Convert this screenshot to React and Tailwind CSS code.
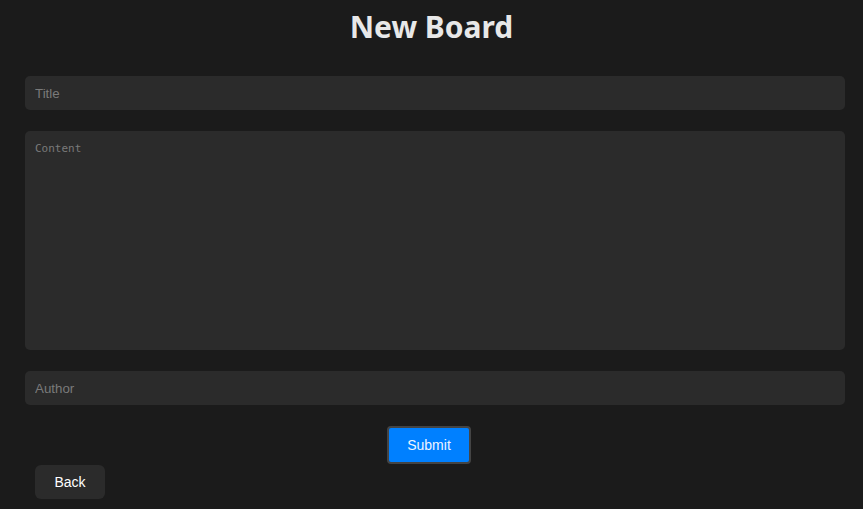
import React from "react";

export default function App() {
  return (
    <div className="min-h-screen w-full bg-[#1b1b1b] font-['Noto_Sans',sans-serif] overflow-hidden">
      <h1 className="pt-[8px] text-center text-[30px] leading-[38px] font-bold text-[#e8e8e8]">
        New Board
      </h1>

      <form className="mt-[30px] pl-[25px] pr-[18px] flex flex-col gap-[21px]" onSubmit={(e) => e.preventDefault()}>
        <input
          type="text"
          placeholder="Title"
          className="h-[34px] w-full rounded-[5px] bg-[#2b2b2b] px-[10px] font-['Liberation_Sans',sans-serif] text-[13.33px] text-[#ddd] placeholder:text-[#7a7a7a] outline-none"
        />
        <textarea
          placeholder="Content"
          className="h-[219px] w-full resize-none rounded-[5px] bg-[#2b2b2b] px-[10px] py-[10px] font-['DejaVu_Sans_Mono',monospace] text-[11px] leading-[15px] text-[#ddd] placeholder:text-[#7a7a7a] outline-none"
        />
        <input
          type="text"
          placeholder="Author"
          className="h-[34px] w-full rounded-[5px] bg-[#2b2b2b] px-[10px] font-['Liberation_Sans',sans-serif] text-[13.33px] text-[#ddd] placeholder:text-[#7a7a7a] outline-none"
        />
        <div className="flex justify-center pr-[12px]">
          <button
            type="submit"
            className="h-[38px] w-[84px] rounded-[4px] border-2 border-[#444] bg-[#0080ff] font-['Liberation_Sans',sans-serif] text-[14px] text-[#eef4ff]"
          >
            Submit
          </button>
        </div>
      </form>

      <div className="pl-[35px] pt-[1px]">
        <button className="h-[34px] w-[70px] rounded-[6px] bg-[#2b2b2b] font-['Liberation_Sans',sans-serif] text-[14px] text-white">
          Back
        </button>
      </div>
    </div>
  );
}
